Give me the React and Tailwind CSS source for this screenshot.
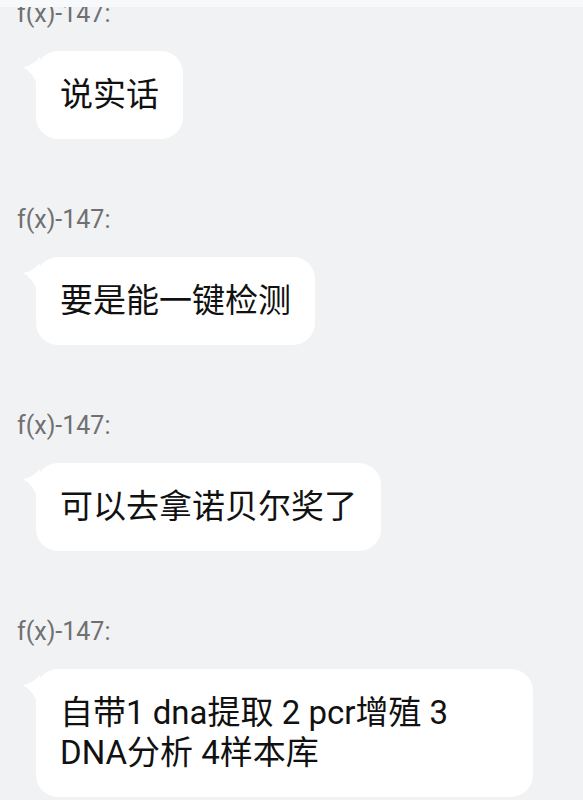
import React from "react";

const messages = [
  { id: 1, name: "f(x)-147:", text: "说实话" },
  { id: 2, name: "f(x)-147:", text: "要是能一键检测" },
  { id: 3, name: "f(x)-147:", text: "可以去拿诺贝尔奖了" },
  { id: 4, name: "f(x)-147:", text: "自带1 dna提取 2 pcr增殖 3 DNA分析 4样本库" },
];

// little curved tail on the bubble's upper left
const Tail = () => (
  <svg
    className="absolute -left-[16px] top-[4px]"
    width="20"
    height="34"
    viewBox="0 0 20 34"
  >
    <path d="M20 2 Q12 11 3 12 Q13 17 18 32 L20 32 Z" fill="#ffffff" />
  </svg>
);

const Message = ({ name, text, first }) => (
  <div className={first ? "" : "mt-[66px]"}>
    <div className="pl-[17px] text-[25px] leading-[30px] text-[#707070]">{name}</div>
    <div className="mt-[22px] ml-[36px] flex">
      <div className="relative max-w-[497px] rounded-[22px] bg-white px-6 py-6 text-[33px] leading-[40px] text-[#111111]">
        <Tail />
        {text}
      </div>
    </div>
  </div>
);

export default function App() {
  return (
    <div
      className="h-[800px] w-[583px] overflow-hidden bg-[#f1f2f4]"
      style={{ fontFamily: 'Roboto, "Noto Sans CJK SC", sans-serif' }}
    >
      <div className="relative z-10 h-[7px] bg-[#f8f9fa]" />
      <div className="-mt-[8px]">
        {messages.map((m, i) => (
          <Message key={m.id} name={m.name} text={m.text} first={i === 0} />
        ))}
      </div>
    </div>
  );
}
